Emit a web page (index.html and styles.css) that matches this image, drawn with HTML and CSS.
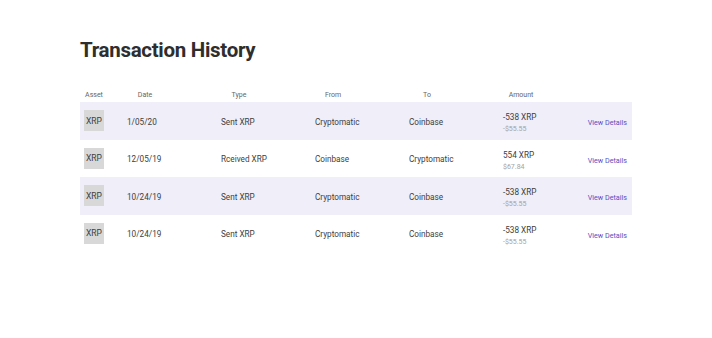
FILE: index.html
```html
<!DOCTYPE html>
<html lang="en">
<head>
    <meta charset="UTF-8">
    <meta name="viewport" content="width=device-width, initial-scale=1.0">
    <title>Transaction History</title>
    <link rel="stylesheet" href="styles.css">
</head>
<body>
    <div class="page">
        <h1 class="title">Transaction History</h1>

        <div class="table">
            <div class="row head">
                <div class="cell asset"><span class="label small">Asset</span></div>
                <div class="cell"><span class="label">Date</span></div>
                <div class="cell"><span class="label">Type</span></div>
                <div class="cell"><span class="label">From</span></div>
                <div class="cell"><span class="label">To</span></div>
                <div class="cell"><span class="label">Amount</span></div>
                <div class="cell"></div>
            </div>

            <div class="row striped">
                <div class="cell asset"><span class="coin">XRP</span></div>
                <div class="cell">1/05/20</div>
                <div class="cell">Sent XRP</div>
                <div class="cell">Cryptomatic</div>
                <div class="cell">Coinbase</div>
                <div class="cell amount">
                    <span class="qty">-538 XRP</span>
                    <span class="usd">-$55.55</span>
                </div>
                <div class="cell action"><a href="#" class="details">View Details</a></div>
            </div>

            <div class="row">
                <div class="cell asset"><span class="coin">XRP</span></div>
                <div class="cell">12/05/19</div>
                <div class="cell">Rceived XRP</div>
                <div class="cell">Coinbase</div>
                <div class="cell">Cryptomatic</div>
                <div class="cell amount">
                    <span class="qty">554 XRP</span>
                    <span class="usd">$67.84</span>
                </div>
                <div class="cell action"><a href="#" class="details">View Details</a></div>
            </div>

            <div class="row striped">
                <div class="cell asset"><span class="coin">XRP</span></div>
                <div class="cell">10/24/19</div>
                <div class="cell">Sent XRP</div>
                <div class="cell">Cryptomatic</div>
                <div class="cell">Coinbase</div>
                <div class="cell amount">
                    <span class="qty">-538 XRP</span>
                    <span class="usd">-$55.55</span>
                </div>
                <div class="cell action"><a href="#" class="details">View Details</a></div>
            </div>

            <div class="row">
                <div class="cell asset"><span class="coin">XRP</span></div>
                <div class="cell">10/24/19</div>
                <div class="cell">Sent XRP</div>
                <div class="cell">Cryptomatic</div>
                <div class="cell">Coinbase</div>
                <div class="cell amount">
                    <span class="qty">-538 XRP</span>
                    <span class="usd">-$55.55</span>
                </div>
                <div class="cell action"><a href="#" class="details">View Details</a></div>
            </div>
        </div>
    </div>
</body>
</html>
```

FILE: styles.css
```css
* {
    margin: 0;
    padding: 0;
    box-sizing: border-box;
}

body {
    font-family: Roboto, 'Liberation Sans', sans-serif;
    background: #fff;
    color: #404040;
}

.page {
    padding: 37px 80px 0 80px;
}

.title {
    font-family: Roboto, 'Liberation Sans', sans-serif;
    font-weight: 700;
    font-size: 20.5px;
    line-height: 27px;
    letter-spacing: -0.3px;
    color: #2e2e2e;
}

.table {
    margin-top: 23px;
    width: 552px;
}

.row {
    display: grid;
    grid-template-columns: 47px 94px 94px 94px 94px 1fr auto;
    height: 37.5px;
    padding-top: 2px;
    align-items: center;
    font-size: 8.2px;
}

.row.head {
    height: 15px;
    padding-top: 0;
    font-size: 7px;
    color: #666;
}

.row.striped {
    background: #efeef9;
}

.cell {
    white-space: nowrap;
}

.label {
    display: inline-block;
    width: 36px;
    text-align: center;
}

.asset {
    padding-left: 4px;
}

.label.small {
    width: 20px;
}

.coin {
    display: flex;
    align-items: center;
    justify-content: center;
    width: 20px;
    height: 21px;
    margin-top: -2px;
    background: #d8d8d8;
    color: #404040;
    font-size: 8.5px;
}

.amount {
    display: flex;
    flex-direction: column;
    gap: 3px;
    padding-top: 2px;
}

.qty {
    font-size: 8.2px;
}

.usd {
    font-size: 7px;
    color: #a3a3a3;
}

.action {
    padding-top: 1px;
    padding-right: 5px;
}

.details {
    font-size: 7.2px;
    color: #5b4fc0;
    text-decoration: none;
}
```
